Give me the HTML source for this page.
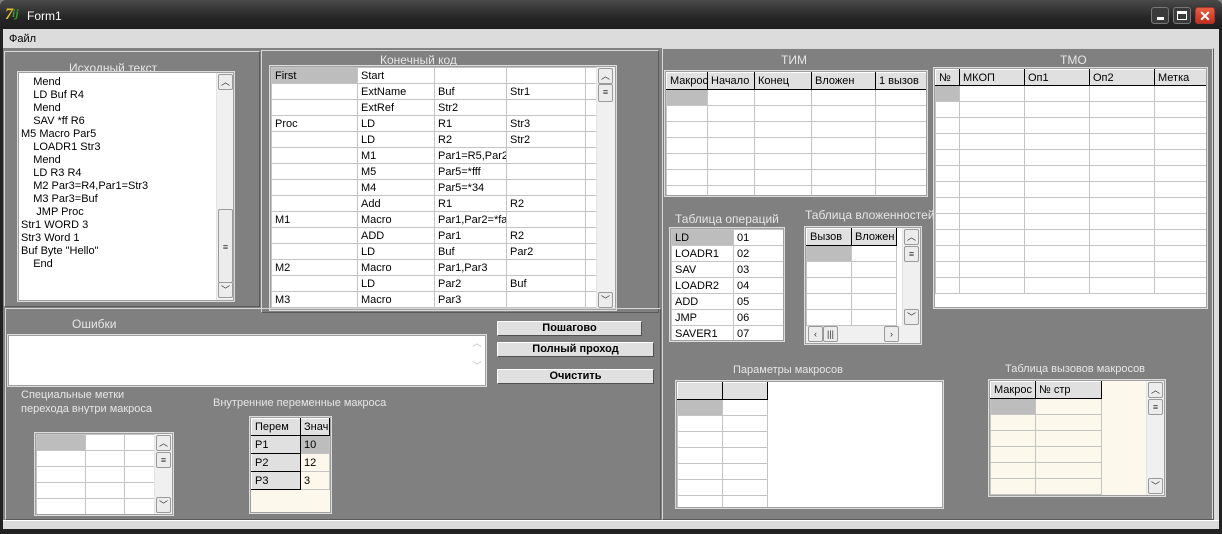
<!DOCTYPE html>
<html><head><meta charset="utf-8"><style>
*{margin:0;padding:0;box-sizing:border-box}
body{width:1222px;height:534px;position:relative;background:#808080;overflow:hidden;font-family:"Liberation Sans",sans-serif;font-size:11px;color:#000}
.a{position:absolute}
.lbl{position:absolute;color:#e6e6e6;font-size:12px;white-space:nowrap}
.pn{position:absolute;border:1px solid #d8d8d8;border-right-color:#5a5a5a;border-bottom-color:#5a5a5a}
.box{position:absolute;background:#fff;border:1px solid #a0a0a0;box-shadow:0 0 0 1px #dcdcdc;overflow:hidden}
table{border-collapse:collapse;table-layout:fixed;position:absolute;left:0;top:0}
td{border:1px solid #c4c4c4;padding:0 0 0 3px;white-space:nowrap;overflow:hidden;line-height:14px;font-size:11px}
td.h{background:#e0e0e0;border:1px solid #000;border-top-color:#fff;border-left-color:#fff}
td.s{background:#bdbdbd}
.sb{position:absolute;background:#f0f0f0;border-left:1px solid #e4e4e4}
.sa{position:absolute;left:1px;width:15px;height:16px;background:#ececec;border:1px solid #9a9a9a;border-radius:2px;font-size:9px;text-align:center;line-height:14px;color:#333}
.btn{position:absolute;background:#e0e0e0;border:1px solid #fff;border-right-color:#505050;border-bottom-color:#505050;font-weight:bold;font-size:11px;text-align:center;line-height:12px}
</style></head><body>
<div class="a" style="left:0;top:0;width:1222px;height:29px;background:linear-gradient(#4a4a4a,#262626 60%,#1e1e1e);border-radius:6px 6px 0 0"></div>
<div class="a" style="left:5px;top:6px;color:#e8c020;font:bold italic 16px 'Liberation Serif',serif">7</div>
<div class="a" style="left:12px;top:6px;color:#3a9a30;font:bold italic 12px 'Liberation Serif',serif">ij</div>
<div class="a" style="left:27px;top:9px;color:#fff;font-size:12px">Form1</div>
<div class="a" style="left:1151px;top:7px;width:18px;height:17px;border:1px solid #777;border-radius:3px;background:#3a3a3a"><div class="a" style="left:5px;top:9px;width:7px;height:3px;background:#fff"></div></div>
<div class="a" style="left:1173px;top:7px;width:18px;height:17px;border:1px solid #777;border-radius:3px;background:#3a3a3a"><div class="a" style="left:3px;top:3px;width:10px;height:9px;border:1px solid #fff;border-top-width:3px"></div></div>
<div class="a" style="left:1195px;top:7px;width:20px;height:17px;border:1px solid #a33;border-radius:3px;background:linear-gradient(#e86040,#c03020);color:#fff;font-size:14px;font-weight:bold;text-align:center;line-height:16px">✕</div>
<div class="a" style="left:0;top:29px;width:3px;height:505px;background:#222"></div>
<div class="a" style="left:1219px;top:29px;width:3px;height:505px;background:#222"></div>
<div class="a" style="left:0;top:529px;width:1222px;height:5px;background:#222"></div>
<div class="a" style="left:3px;top:29px;width:1216px;height:19px;background:#dcdcdc"></div>
<div class="a" style="left:9px;top:33px;font-size:11px">Файл</div>
<div class="a" style="left:3px;top:520px;width:1216px;height:9px;background:#dcdcdc;border-top:1px solid #fff"></div>
<div class="a" style="left:1212px;top:48px;width:7px;height:472px;background:#dcdcdc"></div>

<div class="pn" style="left:4px;top:51px;width:256px;height:256px"></div>
<div class="lbl" style="left:69px;top:61px">Исходный текст</div>
<div class="box" style="left:18px;top:72px;width:216px;height:229px">
<div class="a" style="left:2px;top:3px;line-height:13px;font-size:11px;white-space:pre">    Mend
    LD Buf R4
    Mend
    SAV *ff R6
M5 Macro Par5
    LOADR1 Str3
    Mend
    LD R3 R4
    M2 Par3=R4,Par1=Str3
    M3 Par3=Buf
     JMP Proc
Str1 WORD 3
Str3 Word 1
Buf Byte "Hello"
    End</div>
<div class="sb" style="left:197px;top:0;width:17px;height:227px"><div class="sa" style="top:1px">︿</div><div class="sa" style="top:136px;height:74px;line-height:74px">≡</div><div class="sa" style="top:209px">﹀</div></div>
</div>

<div class="pn" style="left:261px;top:50px;width:398px;height:263px"></div>
<div class="lbl" style="left:380px;top:53px">Конечный код</div>
<div class="box" style="left:270px;top:66px;width:346px;height:244px">
<table style="width:326px"><colgroup><col style="width:86px"><col style="width:77px"><col style="width:72px"><col style="width:79px"><col style="width:12px"></colgroup>
<tr style="height:16px"><td class="s">First</td><td>Start</td><td></td><td></td><td></td></tr>
<tr style="height:16px"><td></td><td>ExtName</td><td>Buf</td><td>Str1</td><td></td></tr>
<tr style="height:16px"><td></td><td>ExtRef</td><td>Str2</td><td></td><td></td></tr>
<tr style="height:16px"><td>Proc</td><td>LD</td><td>R1</td><td>Str3</td><td></td></tr>
<tr style="height:16px"><td></td><td>LD</td><td>R2</td><td>Str2</td><td></td></tr>
<tr style="height:16px"><td></td><td>M1</td><td>Par1=R5,Par2</td><td></td><td></td></tr>
<tr style="height:16px"><td></td><td>M5</td><td>Par5=*fff</td><td></td><td></td></tr>
<tr style="height:16px"><td></td><td>M4</td><td>Par5=*34</td><td></td><td></td></tr>
<tr style="height:16px"><td></td><td>Add</td><td>R1</td><td>R2</td><td></td></tr>
<tr style="height:16px"><td>M1</td><td>Macro</td><td>Par1,Par2=*faf</td><td></td><td></td></tr>
<tr style="height:16px"><td></td><td>ADD</td><td>Par1</td><td>R2</td><td></td></tr>
<tr style="height:16px"><td></td><td>LD</td><td>Buf</td><td>Par2</td><td></td></tr>
<tr style="height:16px"><td>M2</td><td>Macro</td><td>Par1,Par3</td><td></td><td></td></tr>
<tr style="height:16px"><td></td><td>LD</td><td>Par2</td><td>Buf</td><td></td></tr>
<tr style="height:16px"><td>M3</td><td>Macro</td><td>Par3</td><td></td><td></td></tr>
</table>
<div class="sb" style="left:325px;top:0;width:19px;height:242px"><div class="sa" style="top:1px">︿</div><div class="sa" style="top:17px;height:18px">≡</div><div class="sa" style="top:225px">﹀</div></div>
</div>

<div class="pn" style="left:5px;top:308px;width:656px;height:212px"></div>
<div class="lbl" style="left:72px;top:317px">Ошибки</div>
<div class="box" style="left:8px;top:335px;width:478px;height:51px"><div class="a" style="left:460px;top:0;width:16px;height:49px;color:#bbb;font-size:9px;text-align:center">︿<br><br>﹀</div></div>
<div class="btn" style="left:497px;top:321px;width:145px;height:15px">Пошагово</div>
<div class="btn" style="left:497px;top:342px;width:157px;height:15px">Полный проход</div>
<div class="btn" style="left:497px;top:369px;width:157px;height:15px">Очистить</div>
<div class="lbl" style="left:21px;top:389px;font-size:11px">Специальные метки</div>
<div class="lbl" style="left:21px;top:403px;font-size:11px;height:11px;overflow:hidden">перехода внутри макроса</div>
<div class="box" style="left:35px;top:433px;width:138px;height:82px">
<table style="width:118px"><colgroup><col style="width:49px"><col style="width:39px"><col style="width:30px"></colgroup>
<tr style="height:16px"><td class="s"></td><td></td><td></td></tr><tr style="height:16px"><td></td><td></td><td></td></tr><tr style="height:16px"><td></td><td></td><td></td></tr><tr style="height:16px"><td></td><td></td><td></td></tr><tr style="height:16px"><td></td><td></td><td></td></tr></table>
<div class="sb" style="left:118px;top:0;width:18px;height:80px"><div class="sa" style="top:1px">︿</div><div class="sa" style="top:18px">≡</div><div class="sa" style="top:63px">﹀</div></div>
</div>
<div class="lbl" style="left:213px;top:397px;font-size:11px">Внутренние переменные макроса</div>
<div class="box" style="left:250px;top:417px;width:81px;height:96px;background:#fdf8ec">
<table style="width:78px"><colgroup><col style="width:49px"><col style="width:29px"></colgroup>
<tr style="height:17px"><td class="h">Перем</td><td class="h">Знач</td></tr>
<tr style="height:18px"><td class="h">P1</td><td class="s">10</td></tr>
<tr style="height:18px"><td class="h">P2</td><td>12</td></tr>
<tr style="height:18px"><td class="h">P3</td><td>3</td></tr></table>
</div>

<div class="pn" style="left:662px;top:48px;width:552px;height:472px"></div>
<div class="lbl" style="left:781px;top:53px">ТИМ</div>
<div class="box" style="left:665px;top:71px;width:262px;height:125px">
<table style="width:260px"><colgroup><col style="width:41px"><col style="width:47px"><col style="width:57px"><col style="width:64px"><col style="width:51px"></colgroup>
<tr style="height:17px"><td class="h">Макрос</td><td class="h">Начало</td><td class="h">Конец</td><td class="h">Вложен</td><td class="h">1 вызов</td></tr>
<tr style="height:16px"><td class="s"></td><td></td><td></td><td></td><td></td></tr><tr style="height:16px"><td></td><td></td><td></td><td></td><td></td></tr><tr style="height:16px"><td></td><td></td><td></td><td></td><td></td></tr><tr style="height:16px"><td></td><td></td><td></td><td></td><td></td></tr><tr style="height:16px"><td></td><td></td><td></td><td></td><td></td></tr><tr style="height:16px"><td></td><td></td><td></td><td></td><td></td></tr><tr style="height:16px"><td></td><td></td><td></td><td></td><td></td></tr></table>
</div>
<div class="lbl" style="left:1060px;top:53px">ТМО</div>
<div class="box" style="left:934px;top:68px;width:273px;height:240px">
<table style="width:271px"><colgroup><col style="width:24px"><col style="width:65px"><col style="width:65px"><col style="width:65px"><col style="width:52px"></colgroup>
<tr style="height:16px"><td class="h">№</td><td class="h">МКОП</td><td class="h">Оп1</td><td class="h">Оп2</td><td class="h">Метка</td></tr>
<tr style="height:16px"><td class="s"></td><td></td><td></td><td></td><td></td></tr><tr style="height:16px"><td></td><td></td><td></td><td></td><td></td></tr><tr style="height:16px"><td></td><td></td><td></td><td></td><td></td></tr><tr style="height:16px"><td></td><td></td><td></td><td></td><td></td></tr><tr style="height:16px"><td></td><td></td><td></td><td></td><td></td></tr><tr style="height:16px"><td></td><td></td><td></td><td></td><td></td></tr><tr style="height:16px"><td></td><td></td><td></td><td></td><td></td></tr><tr style="height:16px"><td></td><td></td><td></td><td></td><td></td></tr><tr style="height:16px"><td></td><td></td><td></td><td></td><td></td></tr><tr style="height:16px"><td></td><td></td><td></td><td></td><td></td></tr><tr style="height:16px"><td></td><td></td><td></td><td></td><td></td></tr><tr style="height:16px"><td></td><td></td><td></td><td></td><td></td></tr><tr style="height:16px"><td></td><td></td><td></td><td></td><td></td></tr></table>
</div>
<div class="lbl" style="left:675px;top:212px">Таблица операций</div>
<div class="box" style="left:670px;top:228px;width:114px;height:113px">
<table style="width:112px"><colgroup><col style="width:62px"><col style="width:50px"></colgroup>
<tr style="height:16px"><td class="s">LD</td><td>01</td></tr><tr style="height:16px"><td>LOADR1</td><td>02</td></tr><tr style="height:16px"><td>SAV</td><td>03</td></tr><tr style="height:16px"><td>LOADR2</td><td>04</td></tr><tr style="height:16px"><td>ADD</td><td>05</td></tr><tr style="height:16px"><td>JMP</td><td>06</td></tr><tr style="height:16px"><td>SAVER1</td><td>07</td></tr></table>
</div>
<div class="lbl" style="left:805px;top:208px">Таблица вложенностей</div>
<div class="box" style="left:805px;top:227px;width:116px;height:117px">
<table style="width:90px"><colgroup><col style="width:45px"><col style="width:45px"></colgroup>
<tr style="height:17px"><td class="h">Вызов</td><td class="h">Вложен в</td></tr>
<tr style="height:16px"><td class="s"></td><td></td></tr><tr style="height:16px"><td></td><td></td></tr><tr style="height:16px"><td></td><td></td></tr><tr style="height:16px"><td></td><td></td></tr><tr style="height:16px"><td></td><td></td></tr></table>
<div class="sb" style="left:96px;top:0;width:18px;height:98px"><div class="sa" style="top:1px">︿</div><div class="sa" style="top:18px">≡</div><div class="sa" style="top:81px">﹀</div></div>
<div class="sb" style="left:0;top:98px;width:114px;height:17px;border-left:0"><div class="sa" style="top:0;left:2px">‹</div><div class="sa" style="top:0;left:17px">|||</div><div class="sa" style="top:0;left:78px">›</div></div>
</div>
<div class="lbl" style="left:733px;top:364px;font-size:11px">Параметры макросов</div>
<div class="box" style="left:676px;top:381px;width:267px;height:127px">
<table style="width:90px"><colgroup><col style="width:45px"><col style="width:45px"></colgroup>
<tr style="height:17px"><td class="h"></td><td class="h"></td></tr>
<tr style="height:16px"><td class="s"></td><td></td></tr><tr style="height:16px"><td></td><td></td></tr><tr style="height:16px"><td></td><td></td></tr><tr style="height:16px"><td></td><td></td></tr><tr style="height:16px"><td></td><td></td></tr><tr style="height:16px"><td></td><td></td></tr><tr style="height:16px"><td></td><td></td></tr></table>
</div>
<div class="lbl" style="left:1005px;top:363px;font-size:11px">Таблица вызовов макросов</div>
<div class="box" style="left:989px;top:380px;width:176px;height:116px;background:#fdf8ec">
<table style="width:111px"><colgroup><col style="width:45px"><col style="width:66px"></colgroup>
<tr style="height:17px"><td class="h">Макрос</td><td class="h">№ стр</td></tr>
<tr style="height:16px"><td class="s"></td><td></td></tr><tr style="height:16px"><td></td><td></td></tr><tr style="height:16px"><td></td><td></td></tr><tr style="height:16px"><td></td><td></td></tr><tr style="height:16px"><td></td><td></td></tr><tr style="height:16px"><td></td><td></td></tr></table>
<div class="sb" style="left:156px;top:0;width:18px;height:114px"><div class="sa" style="top:1px">︿</div><div class="sa" style="top:18px">≡</div><div class="sa" style="top:97px">﹀</div></div>
</div>
</body></html>
